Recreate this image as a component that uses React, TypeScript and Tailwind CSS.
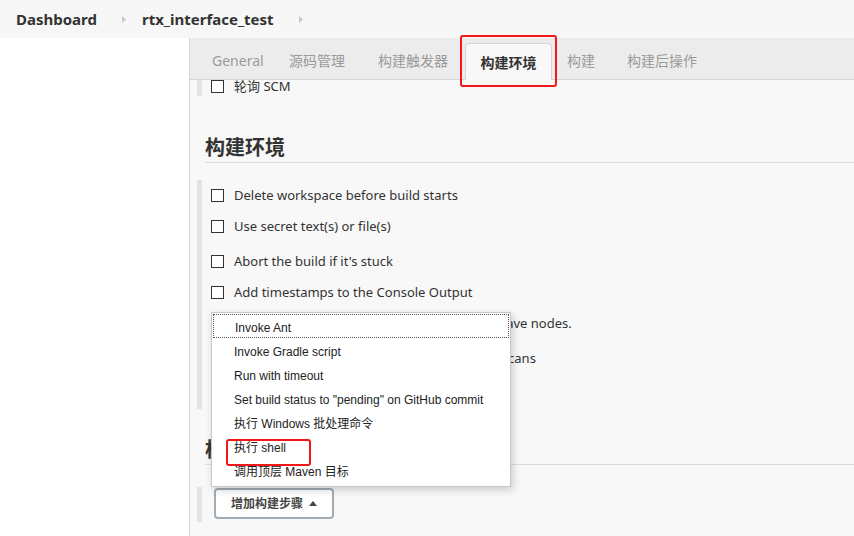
import React from "react";

const font = { fontFamily: '"Noto Sans", "Noto Sans CJK SC", sans-serif' };
const menuFont = { fontFamily: '"Liberation Sans", "Noto Sans CJK SC", sans-serif' };

function Arrow({ cls }: { cls: string }) {
  return (
    <svg width="4" height="7" viewBox="0 0 4 7" className={cls}>
      <path d="M0 0 L4 3.5 L0 7 Z" fill="#c8c8c8" />
    </svg>
  );
}

function Check() {
  return <div className="w-[13px] h-[13px] border border-[#333] bg-white shrink-0" />;
}

function Row({ text }: { text: string }) {
  return (
    <div className="flex items-center h-[31px] pl-[9px]">
      <Check />
      <span className="ml-[10px] text-[13px] text-[#333] whitespace-nowrap">{text}</span>
    </div>
  );
}

const tabs: { t: string; w: string }[] = [
  { t: "General", w: "w-[77px]" },
  { t: "源码管理", w: "w-[89px]" },
  { t: "构建触发器", w: "w-[99px]" },
  { t: "构建环境", w: "" },
  { t: "构建", w: "w-[60px]" },
  { t: "构建后操作", w: "w-[100px]" },
];
const menu = [
  "Invoke Ant",
  "Invoke Gradle script",
  "Run with timeout",
  'Set build status to "pending" on GitHub commit',
  "执行 Windows 批处理命令",
  "执行 shell",
  "调用顶层 Maven 目标",
];

export default function App() {
  return (
    <div className="w-[854px] h-[536px] overflow-hidden bg-[#f8f8f8] flex flex-col" style={font}>
      <div className="h-[38px] bg-[#f7f7f7] flex items-center pl-[16px] shrink-0">
        <span className="text-[15px] font-bold text-[#333]">Dashboard</span>
        <Arrow cls="ml-[25px] mr-[16px]" />
        <span className="text-[15px] font-bold text-[#333]">rtx_interface_test</span>
        <Arrow cls="ml-[25px]" />
      </div>
      <div className="flex flex-1 min-h-0">
        <div className="w-[190px] bg-white border-r border-[#d8d8d8] shrink-0" />
        <div className="flex-1 relative bg-[#f8f8f8]">
          <div className="h-[42px] bg-[#ececec] border-b border-[#d4d4d4] flex items-end pl-[7px] relative z-10">
            {tabs.map(({ t, w }) =>
              t === "构建环境" ? (
                <div
                  key={t}
                  className="relative w-[87px] h-[37px] -mb-px ml-[3px] flex items-center justify-center bg-[#f8f8f8] border border-[#d4d4d4] border-b-0 rounded-t-[4px] text-[14px] font-bold text-[#333]"
                >
                  {t}
                  <div className="absolute -left-[6px] -top-[9px] w-[97px] h-[52px] border-2 border-[#f21818] rounded-[3px]" />
                </div>
              ) : (
                <div
                  key={t}
                  className={`${w} shrink-0 h-[37px] pl-[15px] flex items-center text-[14px] text-[#9a9a9a] whitespace-nowrap`}
                >
                  {t}
                </div>
              )
            )}
          </div>

          {/* remnant of previous section */}
          <div className="flex h-[16px] pl-[7px]">
            <div className="w-[5px] bg-[#e3e3e3]" />
            <div className="flex items-start pl-[9px]">
              <Check />
              <span className="ml-[10px] text-[13px] leading-[14px] text-[#333] -mt-[1px]">轮询 SCM</span>
            </div>
          </div>

          <div className="ml-[15px] mt-[38px] h-[29px] leading-[28px] border-b border-[#dcdcdc] text-[20px] font-bold text-[#333]">
            构建环境
          </div>

          <div className="flex pl-[7px] mt-[17px]">
            <div className="w-[5px] bg-[#e3e3e3]" />
            <div className="flex flex-col pb-[4px]">
              <Row text="Delete workspace before build starts" />
              <Row text="Use secret text(s) or file(s)" />
              <div className="h-[4px]" />
              <Row text="Abort the build if it's stuck" />
              <Row text="Add timestamps to the Console Output" />
              <Row text="Run the build on a set of explicitly selected slave nodes." />
              <div className="h-[4px]" />
              <Row text="Inspect build log for published Gradle build scans" />
              <Row text="With Ant" />
            </div>
          </div>

          <div className="ml-[15px] mt-[27px] h-[29px] leading-[28px] border-b border-[#dcdcdc] text-[20px] font-bold text-[#333]">
            构建
          </div>

          <div className="flex pl-[7px] mt-[22px]">
            <div className="w-[5px] bg-[#e3e3e3]" />
            <div className="pl-[12px] pt-[1px] pb-[3px]">
              <button className="w-[120px] h-[31px] border-2 border-[#a3acb4] rounded-[4px] bg-white flex items-center justify-center gap-[6px] text-[12px] font-bold text-[#444]">
                增加构建步骤
                <svg width="8" height="5" viewBox="0 0 8 5">
                  <path d="M0 5 L4 0 L8 5 Z" fill="#444" />
                </svg>
              </button>
            </div>
          </div>

          {/* dropdown menu */}
          <div
            className="absolute left-[21px] top-[274px] w-[300px] h-[175px] bg-white border border-[#c8c8c8] shadow-[2px_3px_8px_rgba(0,0,0,0.18)] z-20 pt-[1px] px-[1px]"
            style={menuFont}
          >
            {menu.map((m, i) => (
              <div
                key={m}
                className={`relative h-[24px] flex items-center pl-[21px] text-[12px] text-[#222] whitespace-nowrap ${
                  i === 0 ? "border border-dotted border-[#555] pl-[20px]" : ""
                }`}
              >
                <span className="relative top-[2px]">{m}</span>
                {m === "执行 shell" && (
                  <div className="absolute left-[13px] top-[5px] w-[85px] h-[27px] border-2 border-[#f21818] rounded-[3px]" />
                )}
              </div>
            ))}
          </div>
        </div>
      </div>
    </div>
  );
}
